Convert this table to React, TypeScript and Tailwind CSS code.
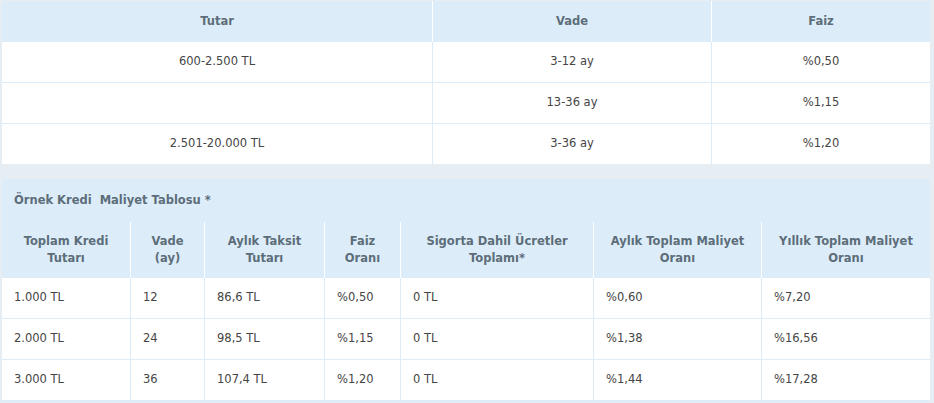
const rates = [
  { amount: "600-2.500 TL", term: "3-12 ay", rate: "%0,50" },
  { amount: "", term: "13-36 ay", rate: "%1,15" },
  { amount: "2.501-20.000 TL", term: "3-36 ay", rate: "%1,20" },
];

const costHeaders = [
  ["Toplam Kredi", "Tutarı"],
  ["Vade", "(ay)"],
  ["Aylık Taksit", "Tutarı"],
  ["Faiz", "Oranı"],
  ["Sigorta Dahil Ücretler", "Toplamı*"],
  ["Aylık Toplam Maliyet", "Oranı"],
  ["Yıllık Toplam Maliyet", "Oranı"],
];

const costRows = [
  ["1.000 TL", "12", "86,6 TL", "%0,50", "0 TL", "%0,60", "%7,20"],
  ["2.000 TL", "24", "98,5 TL", "%1,15", "0 TL", "%1,38", "%16,56"],
  ["3.000 TL", "36", "107,4 TL", "%1,20", "0 TL", "%1,44", "%17,28"],
];

export default function App() {
  return (
    <div className="w-[934px] h-[403px] overflow-hidden bg-[#e6eef4] pl-[2px] pt-px font-['DejaVu_Sans',sans-serif] text-[11.5px] text-[#454545]">
      {/* rate table */}
      <div className="w-[928px] grid grid-cols-[430px_279px_219px] bg-[#dcedf9]">
        {["Tutar", "Vade", "Faiz"].map((h, i) => (
          <div
            key={h}
            className={`h-[41px] flex items-center justify-center font-bold text-[#5d6d79] ${i > 0 ? "border-l border-white" : ""}`}
          >
            {h}
          </div>
        ))}
        {rates.map((r, ri) =>
          [r.amount, r.term, r.rate].map((c, ci) => (
            <div
              key={`${ri}-${ci}`}
              className={`bg-white flex items-center justify-center ${ri > 0 ? "h-[41px] border-t border-[#dcedf9]" : "h-[40px]"} ${ci > 0 ? "border-l border-[#dcedf9]" : ""}`}
            >
              {c}
            </div>
          ))
        )}
      </div>

      {/* cost table */}
      <div className="mt-[15px] w-[928px] bg-[#dcedf9] pb-[2px]">
        <div className="h-[43px] flex items-center pl-3 font-bold text-[#5d6d79]">
          Örnek Kredi&nbsp; Maliyet Tablosu *
        </div>
        <div className="grid grid-cols-[128px_74px_120px_76px_193px_168px_169px]">
          {costHeaders.map((h, i) => (
            <div
              key={h[0]}
              className={`h-[56px] flex flex-col items-center justify-center leading-[17px] font-bold text-[#5d6d79] text-center ${i > 0 ? "border-l border-white" : ""}`}
            >
              <span>{h[0]}</span>
              <span>{h[1]}</span>
            </div>
          ))}
          {costRows.map((row, ri) =>
            row.map((c, ci) => (
              <div
                key={`${ri}-${ci}`}
                className={`bg-white flex items-center px-3 ${ri > 0 ? "h-[41px] border-t border-[#dcedf9]" : "h-[40px]"} ${ci > 0 ? "border-l border-[#dcedf9]" : ""}`}
              >
                {c}
              </div>
            ))
          )}
        </div>
      </div>
    </div>
  );
}
